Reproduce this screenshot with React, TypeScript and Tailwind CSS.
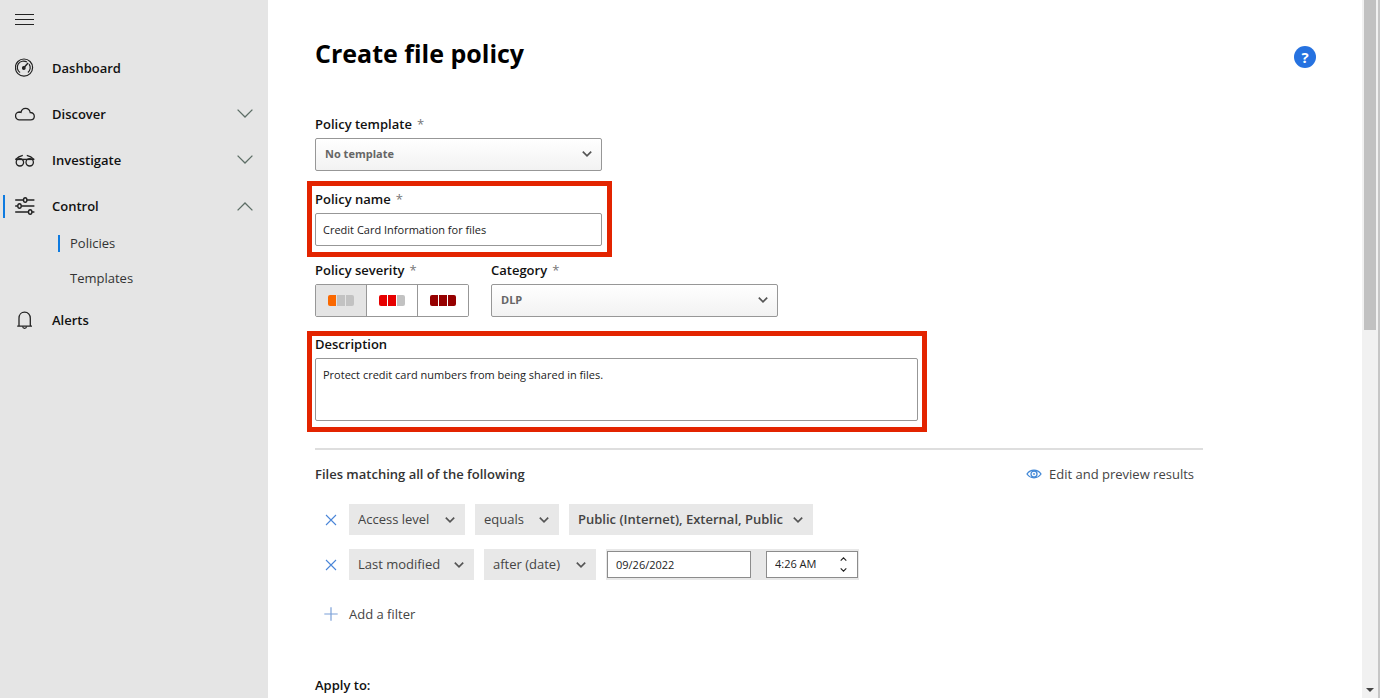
import React, { useState } from "react";
import clsx from "clsx";

type IconProps = { className?: string };

const Chevron = ({ className }: IconProps) => (
  <svg viewBox="0 0 10 6" fill="none" stroke="currentColor" strokeWidth="1.7" className={clsx("block", className)} aria-hidden="true">
    <path d="M0.8 0.7 5 4.8 9.2 0.7" />
  </svg>
);

const NavChevron = ({ open }: { open: boolean }) => (
  <svg viewBox="0 0 16 9" fill="none" stroke="#5d6e66" strokeWidth="1.3" className={clsx("h-[9px] w-4", open ? "rotate-180" : "mb-[2px]")} aria-hidden="true">
    <path d="M0.6 0.6 8 8 15.4 0.6" />
  </svg>
);

const GaugeIcon = () => (
  <svg viewBox="0 0 20 20" fill="none" stroke="#222" strokeWidth="1.2" className="size-5" aria-hidden="true">
    <circle cx="9" cy="9.6" r="8.6" />
    <path d="M5.1 14.5A6.2 6.2 0 0 1 11.900 4.100M14.100 6.100A6.2 6.2 0 0 1 12.900 14.500" />
    <path d="M9.300 9.300 13.100 5" strokeWidth="1.4" />
    <circle cx="8.800" cy="10" r="1.3" fill="#222" />
  </svg>
);

const CloudIcon = () => (
  <svg viewBox="0 0 20 20" fill="none" stroke="#222" strokeWidth="1.3" className="size-5" aria-hidden="true">
    <path d="M4.6 15.8a3.9 3.9 0 0 1-.3-7.8c.7 0 1.200.1 1.700.3C6.500 5.800 8.300 4.300 10.500 4.300c2.500 0 4.300 1.700 4.700 4.200 2.300-.1 4.100 1.500 4.100 3.700 0 2.100-1.600 3.600-3.700 3.600Z" />
  </svg>
);

const GlassesIcon = () => (
  <svg viewBox="0 0 20 20" fill="none" stroke="#222" strokeWidth="1.3" className="size-5" aria-hidden="true">
    <circle cx="4.900" cy="12.300" r="3.700" />
    <circle cx="14.700" cy="12.300" r="3.700" />
    <path d="M.2 9.400h19.200" strokeWidth="1.4" />
    <path d="M1 9.200C2.600 7.200 4.600 6 7.800 5.300M18.600 9.200C17 7.200 15 6 11.800 5.300" />
  </svg>
);

const SlidersIcon = () => (
  <svg viewBox="0 0 20 20" fill="none" stroke="#222" strokeWidth="1.4" className="size-5" aria-hidden="true">
    <path d="M.2 4h8.200M12 4h7.400M.2 10h2.500M6.200 10h13.200M.2 16h13.200M17 16h2.400" />
    <ellipse cx="10.200" cy="4" rx="1.700" ry="2.200" />
    <ellipse cx="4.500" cy="10" rx="1.700" ry="2.200" />
    <ellipse cx="15.200" cy="16" rx="1.700" ry="2.200" />
  </svg>
);

const BellIcon = () => (
  <svg viewBox="0 0 20 20" fill="none" stroke="#222" strokeWidth="1.3" className="size-5" aria-hidden="true">
    <path d="M2.200 16.200h14.800M4 16V8.200C4 4.700 6.200 2.200 9.600 2.200s5.700 2.500 5.700 6V16" />
    <path d="M7.600 16.500c.2 1.200 1 1.900 2 1.900s1.800-.7 2-1.900" />
  </svg>
);

const CloseIcon = () => (
  <svg viewBox="0 0 12 12" stroke="#4a86d8" strokeWidth="1.1" className="size-3" aria-hidden="true">
    <path d="M1 1 11 11M11 1 1 11" />
  </svg>
);

const PlusIcon = () => (
  <svg viewBox="0 0 14 14" stroke="#7ba0d8" strokeWidth="1.2" className="size-[14px]" aria-hidden="true">
    <path d="M7 .3V13.700M.3 7H13.700" />
  </svg>
);

const EyeIcon = () => (
  <svg viewBox="0 0 16 10" fill="none" stroke="#3f86d6" strokeWidth="1.300" className="h-[10px] w-4" aria-hidden="true">
    <path d="M1 5C4.500-.1 11.500-.1 15 5 11.500 10.100 4.500 10.100 1 5Z" />
    <circle cx="8" cy="5" r="3" />
    <circle cx="8" cy="5" r=".8" fill="#3f86d6" strokeWidth=".4" />
  </svg>
);

type NavRowProps = { icon: React.ReactNode; label: string; open?: boolean; active?: boolean };

function NavRow({ icon, label, open, active }: NavRowProps) {
  return (
    <a href="#" className="flex h-[46px] items-center pr-[15px] pl-[3px] text-[13px] font-semibold text-[#111]">
      <span className={clsx("mr-[10px] h-[23px] w-[2px]", active && "bg-[#0f7be0]")} />
      {icon}
      <span className="ml-[17px] flex-1 pt-[2px]">{label}</span>
      {open !== undefined && <NavChevron open={open} />}
    </a>
  );
}

function SubRow({ label, active }: { label: string; active?: boolean }) {
  return (
    <a href="#" className="flex h-[35px] items-center pl-[58px] text-[13px] text-[#333]">
      <span className={clsx("mr-[10px] h-[17px] w-[2px]", active && "bg-[#0f7be0]")} />
      {label}
    </a>
  );
}

function Label({ htmlFor, required, children }: { htmlFor: string; required?: boolean; children: React.ReactNode }) {
  return (
    <label htmlFor={htmlFor} className="mb-[6px] block text-[13px] leading-4 font-semibold text-[#111]">
      {children}
      {required && <span className="ml-[5px] font-normal text-[#777]">*</span>}
    </label>
  );
}

function FormSelect({ id, value }: { id: string; value: string }) {
  return (
    <div className="relative w-[287px]">
      <select
        id={id}
        className="h-[33px] w-full appearance-none rounded-[2px] border border-[#979797] bg-linear-to-b from-white to-[#f2f2f2] pr-8 pl-[9px] text-[11px] font-bold text-[#666]"
      >
        <option>{value}</option>
      </select>
      <Chevron className="pointer-events-none absolute top-[13px] right-[10px] h-[6px] w-[10px] text-[#555]" />
    </div>
  );
}

function FilterSelect({ label, value, width, bold }: { label: string; value: string; width: string; bold?: boolean }) {
  return (
    <div className={clsx("relative", width)}>
      <select
        aria-label={label}
        className={clsx("h-[31px] w-full appearance-none bg-[#e8e8e8] pl-[9px] text-[13px] text-[#444]", bold && "font-semibold")}
      >
        <option>{value}</option>
      </select>
      <Chevron className="pointer-events-none absolute top-[13px] right-[10px] h-[6px] w-[10px] text-[#555]" />
    </div>
  );
}

const severities = [
  { name: "Low", colors: ["bg-[#fa6800]", "bg-[#c2c2c2]", "bg-[#c2c2c2]"] },
  { name: "Medium", colors: ["bg-[#e60000]", "bg-[#e60000]", "bg-[#c2c2c2]"] },
  { name: "High", colors: ["bg-[#960000]", "bg-[#960000]", "bg-[#960000]"] },
];

function SeverityPicker() {
  const [selected, setSelected] = useState("Low");
  return (
    <div role="group" aria-label="Policy severity" className="flex h-[33px] w-[154px] divide-x divide-[#979797] overflow-hidden rounded-[2px] border border-[#979797]">
      {severities.map(({ name, colors }, index) => (
        <button
          key={name}
          id={index === 0 ? "severity" : undefined}
          type="button"
          aria-label={name}
          aria-pressed={selected === name}
          onClick={() => setSelected(name)}
          className={clsx("flex flex-1 items-center justify-center", selected === name ? "bg-[#e4e4e4]" : "bg-white")}
        >
          <span className="flex gap-px overflow-hidden rounded-[2px]">
            {colors.map((color, i) => (
              <span key={i} className={clsx("h-[11px] w-2", color)} />
            ))}
          </span>
        </button>
      ))}
    </div>
  );
}

export default function App() {
  return (
    <div className="flex h-screen overflow-hidden bg-white font-['Open_Sans','Noto_Sans',sans-serif]">
      <aside className="w-[268px] shrink-0 bg-[#e5e5e5]">
        <div className="flex h-[45px] items-start pt-[14px] pl-[15px]">
          <button type="button" aria-label="Toggle navigation" className="flex w-[19px] flex-col gap-1">
            <span className="h-px w-full bg-[#222]" />
            <span className="h-px w-full bg-[#222]" />
            <span className="h-px w-full bg-[#222]" />
          </button>
        </div>
        <nav>
          <NavRow icon={<GaugeIcon />} label="Dashboard" />
          <NavRow icon={<CloudIcon />} label="Discover" open={false} />
          <NavRow icon={<GlassesIcon />} label="Investigate" open={false} />
          <NavRow icon={<SlidersIcon />} label="Control" open active />
          <div className="-mt-[3px] mb-px">
            <SubRow label="Policies" active />
            <SubRow label="Templates" />
          </div>
          <NavRow icon={<BellIcon />} label="Alerts" />
        </nav>
      </aside>

      <main className="min-w-0 flex-1 overflow-hidden pr-[46px] pl-[47px]">
        <header className="flex items-start justify-between pt-[34px]">
          <h1 className="text-[25px] leading-[38px] font-bold text-black">Create file policy</h1>
          <button type="button" aria-label="Help" className="mt-3 flex size-[22px] items-center justify-center rounded-full bg-[#2672e0] text-[15px] leading-none font-bold text-white">
            ?
          </button>
        </header>

        <form className="mt-11 max-w-[888px]">
          <Label htmlFor="template" required>Policy template</Label>
          <FormSelect id="template" value="No template" />

          <div className="mt-[10px] -ml-2 w-[305px] border-5 border-[#e32400] px-[3px] pt-[5px] pb-[6px]">
            <Label htmlFor="name" required>Policy name</Label>
            <input
              id="name"
              type="text"
              defaultValue="Credit Card Information for files"
              className="block h-[33px] w-[287px] rounded-[2px] border border-[#979797] bg-white px-[7px] text-[11px] text-[#222]"
            />
          </div>

          <div className="mt-[5px] flex gap-[22px]">
            <div>
              <Label htmlFor="severity" required>Policy severity</Label>
              <SeverityPicker />
            </div>
            <div>
              <Label htmlFor="category" required>Category</Label>
              <FormSelect id="category" value="DLP" />
            </div>
          </div>

          <div className="mt-[14px] -ml-2 w-[620px] border-5 border-[#e32400] px-[3px] pb-[6px]">
            <Label htmlFor="description">Description</Label>
            <textarea
              id="description"
              defaultValue="Protect credit card numbers from being shared in files."
              className="block h-[63px] w-[603px] resize-none rounded-[2px] border border-[#979797] bg-white px-[7px] py-2 text-[11px] leading-4 text-[#222]"
            />
          </div>

          <section className="mt-4 border-t-2 border-[#dedede] pt-[14px]">
            <div className="flex items-center justify-between pr-[9px] text-[13px] leading-5">
              <h2 className="font-semibold text-[#333]">Files matching all of the following</h2>
              <a href="#" className="flex items-center gap-[7px] text-[#444]">
                <EyeIcon />
                Edit and preview results
              </a>
            </div>

            <div className="mt-5 flex items-center gap-[10px]">
              <button type="button" aria-label="Remove access level filter" className="ml-[10px] w-[14px]">
                <CloseIcon />
              </button>
              <FilterSelect label="Field" value="Access level" width="w-[116px]" />
              <FilterSelect label="Operator" value="equals" width="w-[84px]" />
              <FilterSelect label="Value" value="Public (Internet), External, Public" width="w-[244px]" bold />
            </div>

            <div className="mt-[14px] flex items-center gap-[10px]">
              <button type="button" aria-label="Remove last modified filter" className="ml-[10px] w-[14px]">
                <CloseIcon />
              </button>
              <FilterSelect label="Field" value="Last modified" width="w-[125px]" />
              <FilterSelect label="Operator" value="after (date)" width="w-[112px]" />
              <div className="flex h-[31px] items-center gap-[15px] bg-[#e8e8e8] px-px">
                <input aria-label="Date" type="text" defaultValue="09/26/2022" className="h-[27px] w-[144px] border border-[#8c8c8c] bg-white px-2 text-[11px] text-[#222]" />
                <div className="flex h-[27px] w-[92px] items-center border border-[#8c8c8c] bg-white pr-[10px] pl-2">
                  <input aria-label="Time" type="text" defaultValue="4:26 AM" className="w-0 min-w-0 flex-1 text-[11px] text-[#222]" />
                  <span className="flex flex-col gap-[7px] text-[#222]">
                    <button type="button" aria-label="Later"><Chevron className="h-1 w-[7px] rotate-180" /></button>
                    <button type="button" aria-label="Earlier"><Chevron className="h-1 w-[7px]" /></button>
                  </span>
                </div>
              </div>
            </div>

            <button type="button" className="mt-6 ml-[9px] flex items-center gap-[11px] text-[13px] leading-5 text-[#444]">
              <PlusIcon />
              Add a filter
            </button>
          </section>

          <h2 className="mt-[51px] text-[13px] leading-5 font-semibold text-[#111]">Apply to:</h2>
        </form>
      </main>

      <div className="flex w-[18px] shrink-0 flex-col items-center justify-between border-r-2 border-[#c6c6c6] bg-[#f1f1f1]" aria-hidden="true">
        <div className="h-[330px] w-3 bg-[#c1c1c1]" />
        <svg viewBox="0 0 8 4" className="mb-[6px] h-1 w-2 fill-[#444]">
          <path d="M0 0h8L4 4Z" />
        </svg>
      </div>
    </div>
  );
}
